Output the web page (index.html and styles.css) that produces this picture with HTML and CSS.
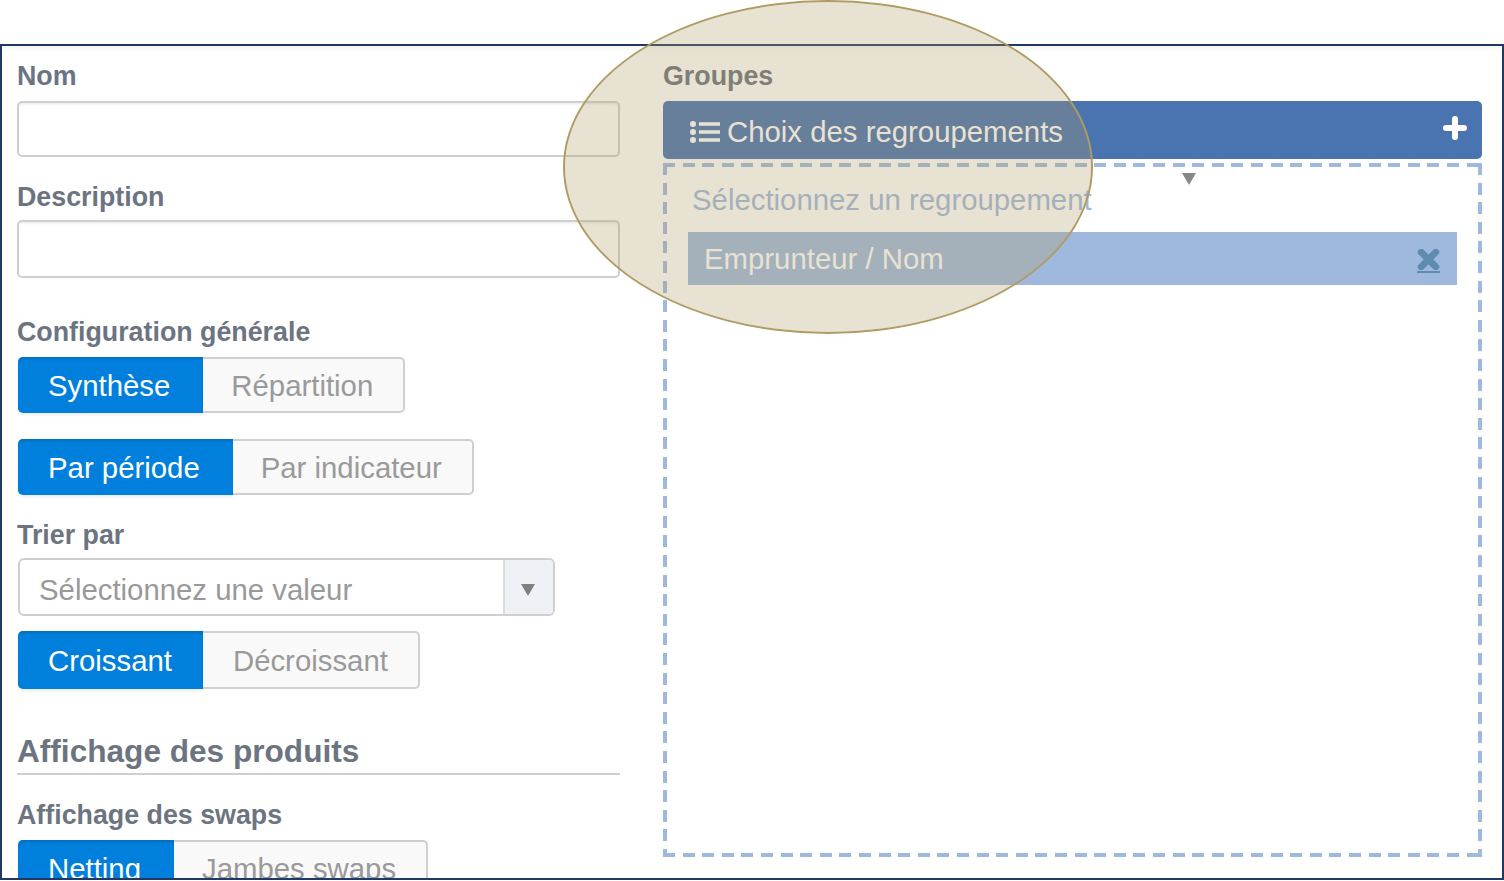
FILE: index.html
```html
<!DOCTYPE html>
<html lang="fr">
<head>
<meta charset="utf-8">
<title>Configuration</title>
<link rel="stylesheet" href="styles.css">
</head>
<body>
<main class="frame">
  <section class="col-left">
    <label class="label label-nom">Nom</label>
    <input class="field field-nom" type="text">
    <label class="label label-desc">Description</label>
    <input class="field field-desc" type="text">
    <div class="label label-config">Configuration générale</div>
    <div class="toggle">
      <span class="opt on pad-a">Synthèse</span><span class="opt pad-b">Répartition</span>
    </div>
    <div class="toggle toggle-second">
      <span class="opt on pad-a">Par période</span><span class="opt pad-b">Par indicateur</span>
    </div>
    <div class="label label-trier">Trier par</div>
    <div class="select">
      <span class="select-value">Sélectionnez une valeur</span>
      <span class="select-btn"><svg class="tri" viewBox="0 0 14 12"><path d="M0 0H14L7 12Z"/></svg></span>
    </div>
    <div class="toggle toggle-sort">
      <span class="opt on pad-s">Croissant</span><span class="opt pad-c">Décroissant</span>
    </div>
    <h2 class="heading">Affichage des produits</h2>
    <div class="label label-swaps">Affichage des swaps</div>
    <div class="toggle">
      <span class="opt on pad-n">Netting</span><span class="opt pad-b">Jambes swaps</span>
    </div>
  </section>
  <section class="col-right">
    <div class="label label-nom">Groupes</div>
    <div class="bar">
      <svg class="list-icon" viewBox="0 0 30 22">
        <circle cx="3" cy="3" r="3"/><circle cx="3" cy="11" r="3"/><circle cx="3" cy="19" r="3"/>
        <path d="M9 1.2H30V4.8H9ZM9 9.2H30V12.8H9ZM9 17.2H30V20.8H9Z"/>
      </svg>
      <span class="bar-title">Choix des regroupements</span>
      <svg class="plus-icon" viewBox="0 0 24 24"><path d="M12 3V21M3 12H21"/></svg>
    </div>
    <div class="dropzone">
      <div class="hint">Sélectionnez un regroupement</div>
      <div class="chip">
        <span>Emprunteur / Nom</span>
        <a class="chip-x"><svg viewBox="0 0 20 20"><path d="M3 3L17 17M17 3L3 17"/></svg></a>
      </div>
      <svg class="caret" viewBox="0 0 14 12"><path d="M0 0H14L7 12Z"/></svg>
    </div>
  </section>
</main>
<div class="spotlight"></div>
</body>
</html>
```
FILE: styles.css
```css
* { box-sizing: border-box; }
html, body { margin: 0; padding: 0; height: 881px; overflow: hidden; background: #fff; }
body {
  position: relative;
  padding-top: 44px;
  font-family: "Liberation Sans", Arial, sans-serif;
}
.frame {
  display: flex;
  gap: 43px;
  height: 836px;
  padding: 16px 20px 0 15px;
  border: 2px solid #1f3864;
  overflow: hidden;
  background: linear-gradient(#f6f6f6, #fff 7px);
}
.col-left { width: 603px; flex: none; display: flex; flex-direction: column; align-items: flex-start; }
.col-right { width: 819px; flex: none; }

.label { display: block; flex: none; height: 28px; font-size: 26.8px; line-height: 28px; font-weight: 700; color: #6b7480; }
.label-nom { margin-bottom: 11px; }
.label-desc { margin-top: 26px; margin-bottom: 9px; }
.label-config { margin-top: 40px; margin-bottom: 11px; }
.label-trier { margin-top: 26px; margin-bottom: 9px; }
.label-swaps { margin-top: 26px; margin-bottom: 11px; }

.field {
  display: block;
  flex: none;
  width: 603px;
  margin: 0;
  border: 2px solid #cfcfcf;
  border-radius: 5px;
  background: #fff;
  box-shadow: inset 0 3px 3px -2px #e6e6e6;
  outline: none;
}
.field-nom { height: 56px; }
.field-desc { height: 58px; }

.toggle { display: flex; height: 56px; margin-left: 1px; flex: none; }
.toggle-second { margin-top: 26px; }
.toggle-sort { margin-top: 15px; height: 58px; }
.opt {
  display: flex;
  align-items: center;
  font-size: 29.35px;
  color: #9a9a9a;
  background: #f9f9f9;
  border: 2px solid #cfcfcf;
  border-left: 0;
  border-radius: 0 5px 5px 0;
}
.opt.on {
  color: #fff;
  background: #0080dc;
  border: 0;
  border-radius: 5px 0 0 5px;
  box-shadow: inset 0 3px 4px -2px #0068b4, 0 2px 3px rgba(0, 0, 0, .08);
}
.pad-a { padding: 1px 33px 0 30px; }
.pad-s { padding: 1px 31px 0 30px; }
.pad-n { padding: 1px 33px 0 30px; }
.pad-b { padding: 1px 30px 0 28px; }
.pad-c { padding: 1px 30px 0 30px; }

.select {
  display: flex;
  width: 537px;
  height: 58px;
  margin-left: 1px;
  border: 2px solid #cfcfcf;
  border-radius: 6px;
  flex: none;
}
.select-value { flex: 1; padding-left: 19px; font-size: 29.35px; line-height: 59px; color: #999; }
.select-btn {
  display: flex;
  align-items: center;
  justify-content: center;
  width: 50px;
  padding: 6px 2px 0 0;
  background: #eef1f5;
  border-left: 2px solid #dcdcdc;
  border-radius: 0 4px 4px 0;
}
.tri { width: 14px; height: 12px; fill: #808080; }

.heading {
  width: 603px;
  height: 44px;
  margin: 42px 0 0;
  font-size: 31.6px;
  line-height: 40px;
  font-weight: 700;
  color: #6b7480;
  border-bottom: 2px solid #cfcfcf;
  flex: none;
}

.bar {
  display: flex;
  align-items: center;
  height: 58px;
  padding: 4px 15px 0 27px;
  border-radius: 5px;
  background: #4a74b0;
  color: #fff;
  font-size: 29.35px;
}
.list-icon { width: 30px; height: 22px; fill: #fff; flex: none; margin-right: 7px; }
.bar-title { flex: 1; }
.plus-icon { width: 24px; height: 24px; margin-bottom: 8px; fill: none; stroke: #fff; stroke-width: 6px; stroke-linecap: round; }

.dropzone {
  position: relative;
  height: 694px;
  margin-top: 4px;
  padding: 18px 25px 0;
  background-image:
    repeating-linear-gradient(90deg, #9fb9de 0 12px, transparent 12px 19.6px),
    repeating-linear-gradient(90deg, #9fb9de 0 12px, transparent 12px 19.6px),
    repeating-linear-gradient(180deg, #9fb9de 0 12px, transparent 12px 19.6px),
    repeating-linear-gradient(180deg, #9fb9de 0 12px, transparent 12px 19.6px);
  background-size: 100% 4px, 100% 4px, 4px 100%, 4px 100%;
  background-position: 0 0, 0 100%, 0 0, 100% 0;
  background-repeat: no-repeat;
}
.hint { height: 34px; padding-left: 4px; font-size: 29.35px; line-height: 38px; color: #9fb9de; }
.chip {
  display: flex;
  align-items: center;
  justify-content: space-between;
  width: 769px;
  height: 53px;
  margin-top: 17px;
  padding: 0 17px 0 16px;
  background: #9fb9de;
  color: #fff;
  font-size: 29.35px;
}
.chip-x { display: block; height: 24px; width: 23px; border-bottom: 2px solid #5f8cae; margin-top: 4px; }
.chip-x svg { display: block; width: 23px; height: 21px; fill: none; stroke: #5f8cae; stroke-width: 6.5px; stroke-linecap: round; }
.caret { position: absolute; left: 519px; top: 10px; width: 14px; height: 12px; fill: #888; }

.spotlight {
  position: absolute;
  left: 563px;
  top: 0;
  width: 530px;
  height: 334px;
  border: 2px solid #b09b64;
  border-radius: 50%;
  background: rgba(176, 155, 100, .29);
  background-clip: padding-box;
}
```
